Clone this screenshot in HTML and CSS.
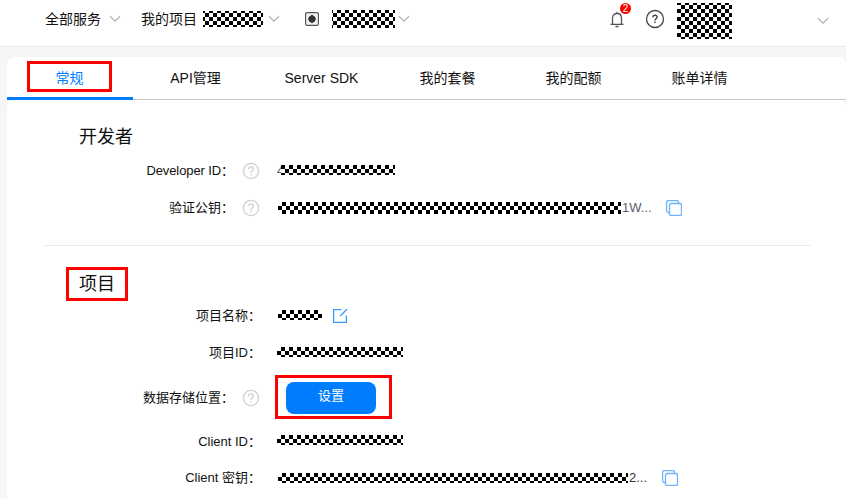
FILE: index.html
```html
<!DOCTYPE html>
<html lang="zh-CN">
<head>
<meta charset="utf-8">
<title>项目设置</title>
<link rel="stylesheet" href="styles.css">
</head>
<body>
<svg width="0" height="0" class="defs">
  <symbol id="chev" viewBox="0 0 12 8"><path d="M1 1.2 6 6.2 11 1.2" fill="none" stroke="#b5b5b5" stroke-width="1.3"/></symbol>
  <symbol id="help" viewBox="0 0 18 18"><circle cx="9" cy="9" r="7.6" fill="none" stroke="currentColor" stroke-width="1.3"/><path d="M6.6 7.3C6.6 5.7 7.6 4.8 9 4.8s2.4.9 2.4 2.2c0 1.7-2.4 1.9-2.4 3.9M9 12v1.4" fill="none" stroke="currentColor" stroke-width="1.3"/></symbol>
  <symbol id="copy" viewBox="0 0 16 16"><rect x="3.5" y="3.5" width="12" height="12" rx="1.6" fill="none" stroke="#6bb3fb" stroke-width="1.3"/><path d="M3 12.5H2.2A1.7 1.7 0 0 1 .6 10.9V2.2A1.6 1.6 0 0 1 2.2.6H10.9A1.6 1.6 0 0 1 12.5 2.2V3" fill="none" stroke="#6bb3fb" stroke-width="1.3"/></symbol>
</svg>
<header class="top">
  <span class="services">全部服务</span><svg class="chev c1"><use href="#chev"/></svg>
  <span class="project">我的项目</span><i class="mask m-project"></i><svg class="chev c2"><use href="#chev"/></svg>
  <svg class="app" viewBox="0 0 14 14"><rect x=".6" y=".6" width="12.8" height="12.8" rx="1.5" fill="#f4f4f4" stroke="#555" stroke-width="1.2"/><path d="M7 2.7 9.8 4.5 11 7 9.8 9.5 7 11.3 4.2 9.5 3 7 4.2 4.5Z" fill="#333"/></svg>
  <i class="mask m-app"></i><svg class="chev c3"><use href="#chev"/></svg>
  <span class="bell"><svg viewBox="0 0 14 17"><path d="M.5 13.4H13.5M2.5 13.2V7.2C2.5 4.3 4.4 2.5 7 2.5s4.5 1.8 4.5 4.7v6M7 .7v1.8M5.5 15.5h3" fill="none" stroke="#555" stroke-width="1.3"/></svg><b>2</b></span>
  <svg class="help-top" viewBox="0 0 20 20"><circle cx="10" cy="10" r="8.5" fill="none" stroke="#444" stroke-width="1.3"/><path d="M7.9 8.3C7.9 7 8.8 6.3 10 6.3s2.1.7 2.1 1.8c0 1.5-2.1 1.6-2.1 3.3M10 12.5v1.5" fill="none" stroke="#444" stroke-width="1.4"/></svg>
  <i class="mask m-user"></i>
  <svg class="chev c4"><use href="#chev"/></svg>
</header>
<main>
  <nav class="tabs">
    <a class="tab active"><span>常规</span><i class="mark mark-tab"></i></a>
    <a class="tab">API管理</a>
    <a class="tab">Server SDK</a>
    <a class="tab">我的套餐</a>
    <a class="tab">我的配额</a>
    <a class="tab">账单详情</a>
  </nav>
  <div class="card">
    <section class="developer">
      <h2>开发者</h2>
      <div class="row"><div class="label"><span class="latin">Developer ID：</span><svg class="help"><use href="#help"/></svg></div><span class="val first">4</span><i class="mask m-dev"></i></div>
      <div class="row"><div class="label">验证公钥：<svg class="help"><use href="#help"/></svg></div><i class="mask m-key"></i><span class="val">1W...</span><svg class="copy"><use href="#copy"/></svg></div>
    </section>
    <section class="details">
      <h2><span class="boxed">项目<i class="mark mark-title"></i></span></h2>
      <div class="row"><div class="label">项目名称：</div><i class="mask m-name"></i><svg class="edit" viewBox="0 0 16 16"><path d="M9.5 1.6H1.6V14.4H14.4V7.5M8.2 8 15 1.2" fill="none" stroke="#3b9cff" stroke-width="1.3"/></svg></div>
      <div class="row"><div class="label">项目ID：</div><i class="mask m-pid"></i></div>
      <div class="row storage"><div class="label">数据存储位置：<svg class="help"><use href="#help"/></svg></div><div class="action"><button>设置</button><i class="mark mark-button"></i></div></div>
      <div class="row client"><div class="label">Client ID：</div><i class="mask m-cid"></i></div>
      <div class="row secret"><div class="label">Client 密钥：</div><i class="mask m-secret"></i><span class="val dark">2...</span><svg class="copy"><use href="#copy"/></svg></div>
    </section>
  </div>
</main>
</body>
</html>
```
FILE: styles.css
```css
* { box-sizing: border-box; }
body {
  margin: 0;
  height: 499px;
  overflow: hidden;
  display: flex;
  flex-direction: column;
  background: #f6f6f6;
  color: #111;
  font: 14px/20px "Liberation Sans", "Noto Sans CJK SC", sans-serif;
}
.defs { position: absolute; }
svg { display: block; flex: none; }
span, i, b { flex: none; }

.mask {
  display: block;
  height: 10px;
  background: repeating-conic-gradient(#000 0 25%, #fff 0 50%) 0 0 / 8px 8px;
}

.top {
  flex: none;
  height: 47px;
  padding: 0 17px 8px 45px;
  display: flex;
  align-items: center;
  background: #fff;
  border-bottom: 1px solid #e9e9e9;
}
.services, .project { width: 57px; white-space: nowrap; }
.chev { width: 12px; height: 8px; }
.c1 { margin: 0 20px 0 7px; }
.project { width: 58px; }
.m-project { width: 60px; height: 16px; margin-left: 4px; background-position: -6px -2px; }
.c2 { margin-left: 5px; }
.app { width: 14px; height: 14px; margin-left: 25px; }
.m-app { width: 63px; height: 18px; margin-left: 13px; background-position: 1px -1px; }
.c3 { margin-left: 3px; }
.bell { position: relative; margin-left: 200px; }
.bell svg { width: 14px; height: 17px; }
.bell b {
  position: absolute;
  left: 10px;
  top: -8px;
  width: 11px;
  height: 11px;
  border-radius: 50%;
  background: #f00;
  color: #fff;
  font: 10px/11px "Liberation Sans", sans-serif;
  text-align: center;
}
.help-top { width: 20px; height: 20px; margin-left: 21px; }
.m-user { width: 55px; height: 36px; margin: 3px 0 0 12px; background-position: 4px -2px; }
.c4 { margin: 4px 0 0 auto; }

main { flex: 1; margin: 10px 0 0 7px; display: flex; flex-direction: column; }
.tabs {
  height: 43px;
  display: flex;
  background: #fff;
  border-bottom: 1px solid #c9c9c9;
  border-radius: 7px 7px 0 0;
}
.tab {
  position: relative;
  width: 126px;
  height: 43px;
  padding-right: 1px;
  text-align: center;
  line-height: 42px;
}
.active { color: #007dff; border-bottom: 3px solid #007dff; }
.mark { position: absolute; border: 3px solid #f00; pointer-events: none; }
.mark-tab { left: 20px; top: 4px; width: 85px; height: 31px; }
.card { flex: 1; background: #fff; border-radius: 7px 7px 0 0; }

h2 { margin: 0; padding-left: 72px; font-size: 18px; line-height: 34px; font-weight: 400; }
.developer { height: 145px; padding-top: 20px; }
.details { position: relative; padding-top: 22px; }
.details::before {
  content: "";
  display: block;
  height: 1px;
  margin: -22px 35px 21px 36px;
  background: #ebebeb;
}
.boxed { position: relative; display: inline-block; }
.mark-title { left: -13px; top: 0; width: 62px; height: 34px; }
.row { height: 30px; margin-bottom: 7px; display: flex; align-items: center; font-size: 13px; }
.developer .row:first-of-type { margin-top: 2px; }
.label {
  flex: none;
  width: 254px;
  margin-right: 16px;
  display: flex;
  align-items: center;
  justify-content: flex-end;
  white-space: pre;
}
.latin { letter-spacing: -.1px; }
.help { width: 18px; height: 18px; margin: 0 1px 0 8px; color: #cfcfcf; }
.val { color: #575d6c; }
.dark { color: #333; }
.first { width: 8px; margin-right: -4px; }
.m-dev { width: 114px; margin-top: -3px; background-position: 0 4px; }
.m-key { width: 343px; height: 12px; margin-left: 1px; margin-right: 1px; }
.copy { width: 16px; height: 16px; margin-left: 14px; }
.m-name { width: 44px; margin-left: 1px; margin-top: -2px; }
.edit { width: 16px; height: 16px; margin-left: 10px; }
.m-pid, .m-cid { width: 126px; margin-top: -3px; }
.storage { margin-top: 15px; }
.action { position: relative; margin-left: 9px; }
button {
  display: block;
  width: 90px;
  height: 32px;
  padding: 0 0 4px;
  border: 0;
  border-radius: 8px;
  background: #007dff;
  color: #fff;
  font: inherit;
}
.mark-button { left: -11px; top: -7px; width: 117px; height: 44px; }
.client { margin-top: 14px; margin-bottom: 6px; }
.m-cid { margin-top: -4px; }
.m-secret { width: 350px; margin: -1px 1px 0; }
.secret .copy { margin-left: 15px; }
```
